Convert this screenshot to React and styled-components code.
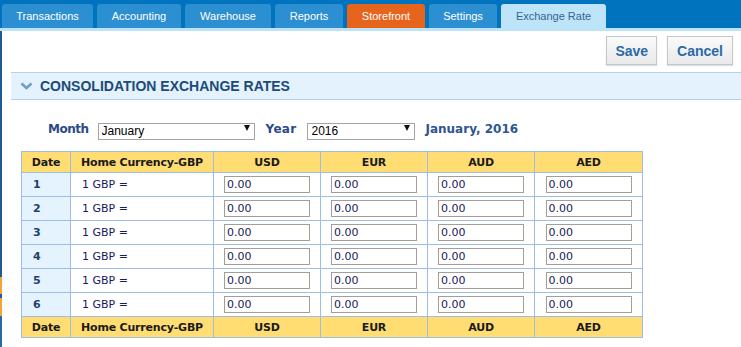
import React from 'react';
import styled, { createGlobalStyle } from 'styled-components';

const GlobalStyle = createGlobalStyle`
  html, body {
    margin: 0;
    padding: 0;
    background: #ffffff;
    font-family: Arial, "Liberation Sans", sans-serif;
  }
`;

const Page = styled.div`
  width: 741px;
  height: 347px;
  overflow: hidden;
  display: flex;
  flex-direction: column;
`;

const TopBar = styled.div`
  height: 28px;
  background: #0073bf;
  display: flex;
  align-items: flex-end;
  gap: 4px;
  padding-left: 2px;
  border-bottom: 3px solid #bde3f8;
`;

const tabColors = {
  normal: { bg: '#2c8fd2', fg: '#ffffff' },
  store: { bg: '#e7641c', fg: '#ffffff' },
  active: { bg: '#bee4f9', fg: '#35648f' },
};

const Tab = styled.div`
  height: 24px;
  width: ${p => p.$w}px;
  box-sizing: border-box;
  display: flex;
  align-items: center;
  justify-content: center;
  border-radius: 3px 3px 0 0;
  font-size: 11px;
  background: ${p => tabColors[p.$kind].bg};
  color: ${p => tabColors[p.$kind].fg};
`;

const Main = styled.div`
  flex: 1;
  border-left: 2px solid #1e5b96;
  border-image: linear-gradient(
      #1e5b96 0, #1e5b96 245px,
      #f5a23a 245px, #f5a23a 262px,
      #1e5b96 262px, #1e5b96 266px,
      #f5a23a 266px, #f5a23a 284px,
      #2b6aa6 284px
    ) 1;
  display: flex;
  flex-direction: column;
`;

const Actions = styled.div`
  display: flex;
  justify-content: flex-end;
  gap: 10px;
  padding: 5px 8px 0 0;
`;

const Button = styled.button`
  height: 29px;
  padding: 0 ${p => p.$pad}px;
  border: 1px solid #c6c6c6;
  background: linear-gradient(#fafafa, #e9e9e9);
  box-shadow: 0 1px 1px rgba(0, 0, 0, 0.12);
  color: #2a6aa8;
  font-family: Arial, "Liberation Sans", sans-serif;
  font-weight: bold;
  font-size: 14px;
`;

const SectionHeader = styled.div`
  margin: 7px 0 0 9px;
  height: 26px;
  background: #e3f2fd;
  border-top: 1px solid #b3d2ea;
  border-bottom: 1px solid #b3d2ea;
  display: flex;
  align-items: center;
  gap: 7px;
  padding-left: 9px;
  color: #1d4a79;
  font-weight: bold;
  font-size: 14px;
`;

const Filters = styled.div`
  display: flex;
  align-items: center;
  margin: 20px 0 0 46px;
  height: 17px;
  font-family: "DejaVu Sans", Verdana, sans-serif;
`;

const Label = styled.span`
  font-weight: bold;
  font-size: 12px;
  letter-spacing: ${p => p.$ls}px;
  color: #2c4a86;
  margin-right: ${p => p.$gap}px;
`;

const SelectWrap = styled.div`
  position: relative;
  width: ${p => p.$w}px;
  height: 17px;
  margin-right: ${p => p.$gap}px;
`;

const Select = styled.select`
  appearance: none;
  width: 100%;
  height: 100%;
  box-sizing: border-box;
  border: 1px solid #a4a4a4;
  background: #fff;
  padding: 0 0 0 3px;
  font-family: Arial, "Liberation Sans", sans-serif;
  font-size: 12px;
  color: #000;
  border-radius: 0;
  outline: none;
`;

const Arrow = styled.span`
  position: absolute;
  right: 5px;
  top: 5px;
  width: 0;
  height: 0;
  border-left: 3px solid transparent;
  border-right: 3px solid transparent;
  border-top: 6px solid #111;
  pointer-events: none;
`;

const Period = styled.span`
  font-weight: bold;
  font-size: 12px;
  color: #2c5592;
`;

const Table = styled.table`
  margin: 14px 0 0 19px;
  border-collapse: collapse;
  table-layout: fixed;
  width: 621px;
  font-family: "DejaVu Sans", Verdana, sans-serif;
  font-size: 11px;

  td, th {
    border: 1px solid #9ebde6;
    padding: 0;
  }
`;

const HeadCell = styled.th`
  height: 20px;
  background: #ffdd73;
  color: #1a1a1a;
  font-weight: bold;
  font-size: 11px;
  letter-spacing: -0.2px;
  text-align: center;
`;

const DateCell = styled.td`
  height: 23px;
  background: #e4f3fd;
  color: #1f3f6f;
  font-weight: bold;
  padding-left: 11px !important;
`;

const BaseCell = styled.td`
  color: #1a1a5a;
  padding-left: 11px !important;
`;

const RateCell = styled.td`
  text-align: center;
`;

const RateInput = styled.input`
  width: 86px;
  height: 17px;
  box-sizing: border-box;
  border: 1px solid #a49e93;
  padding: 0 0 0 2px;
  font-family: "DejaVu Sans", Verdana, sans-serif;
  font-size: 11px;
  color: #1a1a5a;
  vertical-align: middle;
  outline: none;
`;

const tabs = [
  { label: 'Transactions', w: 91, kind: 'normal' },
  { label: 'Accounting', w: 84, kind: 'normal' },
  { label: 'Warehouse', w: 86, kind: 'normal' },
  { label: 'Reports', w: 68, kind: 'normal' },
  { label: 'Storefront', w: 78, kind: 'store' },
  { label: 'Settings', w: 68, kind: 'normal' },
  { label: 'Exchange Rate', w: 105, kind: 'active' },
];

const currencies = ['USD', 'EUR', 'AUD', 'AED'];
const days = [1, 2, 3, 4, 5, 6];

function HeaderRow() {
  return (
    <tr>
      <HeadCell>Date</HeadCell>
      <HeadCell>Home Currency-GBP</HeadCell>
      {currencies.map(c => <HeadCell key={c}>{c}</HeadCell>)}
    </tr>
  );
}

function Chevron() {
  return (
    <svg width="13" height="8" viewBox="0 0 13 8">
      <path d="M1.5 1.5 L6.5 6 L11.5 1.5" fill="none" stroke="#6e9fc8" strokeWidth="2.6" />
    </svg>
  );
}

export default function App() {
  return (
    <Page>
      <GlobalStyle />
      <TopBar>
        {tabs.map(t => (
          <Tab key={t.label} $w={t.w} $kind={t.kind}>{t.label}</Tab>
        ))}
      </TopBar>
      <Main>
        <Actions>
          <Button $pad={8}>Save</Button>
          <Button $pad={9}>Cancel</Button>
        </Actions>
        <SectionHeader>
          <Chevron />
          CONSOLIDATION EXCHANGE RATES
        </SectionHeader>
        <Filters>
          <Label $gap={9} $ls={-0.5}>Month</Label>
          <SelectWrap $w={157} $gap={11}>
            <Select defaultValue="January">
              <option>January</option>
            </Select>
            <Arrow />
          </SelectWrap>
          <Label $gap={11} $ls={0.3}>Year</Label>
          <SelectWrap $w={108} $gap={10}>
            <Select defaultValue="2016">
              <option>2016</option>
            </Select>
            <Arrow />
          </SelectWrap>
          <Period>January, 2016</Period>
        </Filters>
        <Table>
          <colgroup>
            <col style={{ width: 49 }} />
            <col style={{ width: 143 }} />
            <col style={{ width: 107 }} />
            <col style={{ width: 107 }} />
            <col style={{ width: 107 }} />
            <col style={{ width: 108 }} />
          </colgroup>
          <thead>
            <HeaderRow />
          </thead>
          <tbody>
            {days.map(d => (
              <tr key={d}>
                <DateCell>{d}</DateCell>
                <BaseCell>1 GBP =</BaseCell>
                {currencies.map(c => (
                  <RateCell key={c}>
                    <RateInput defaultValue="0.00" />
                  </RateCell>
                ))}
              </tr>
            ))}
          </tbody>
          <tfoot>
            <HeaderRow />
          </tfoot>
        </Table>
      </Main>
    </Page>
  );
}
